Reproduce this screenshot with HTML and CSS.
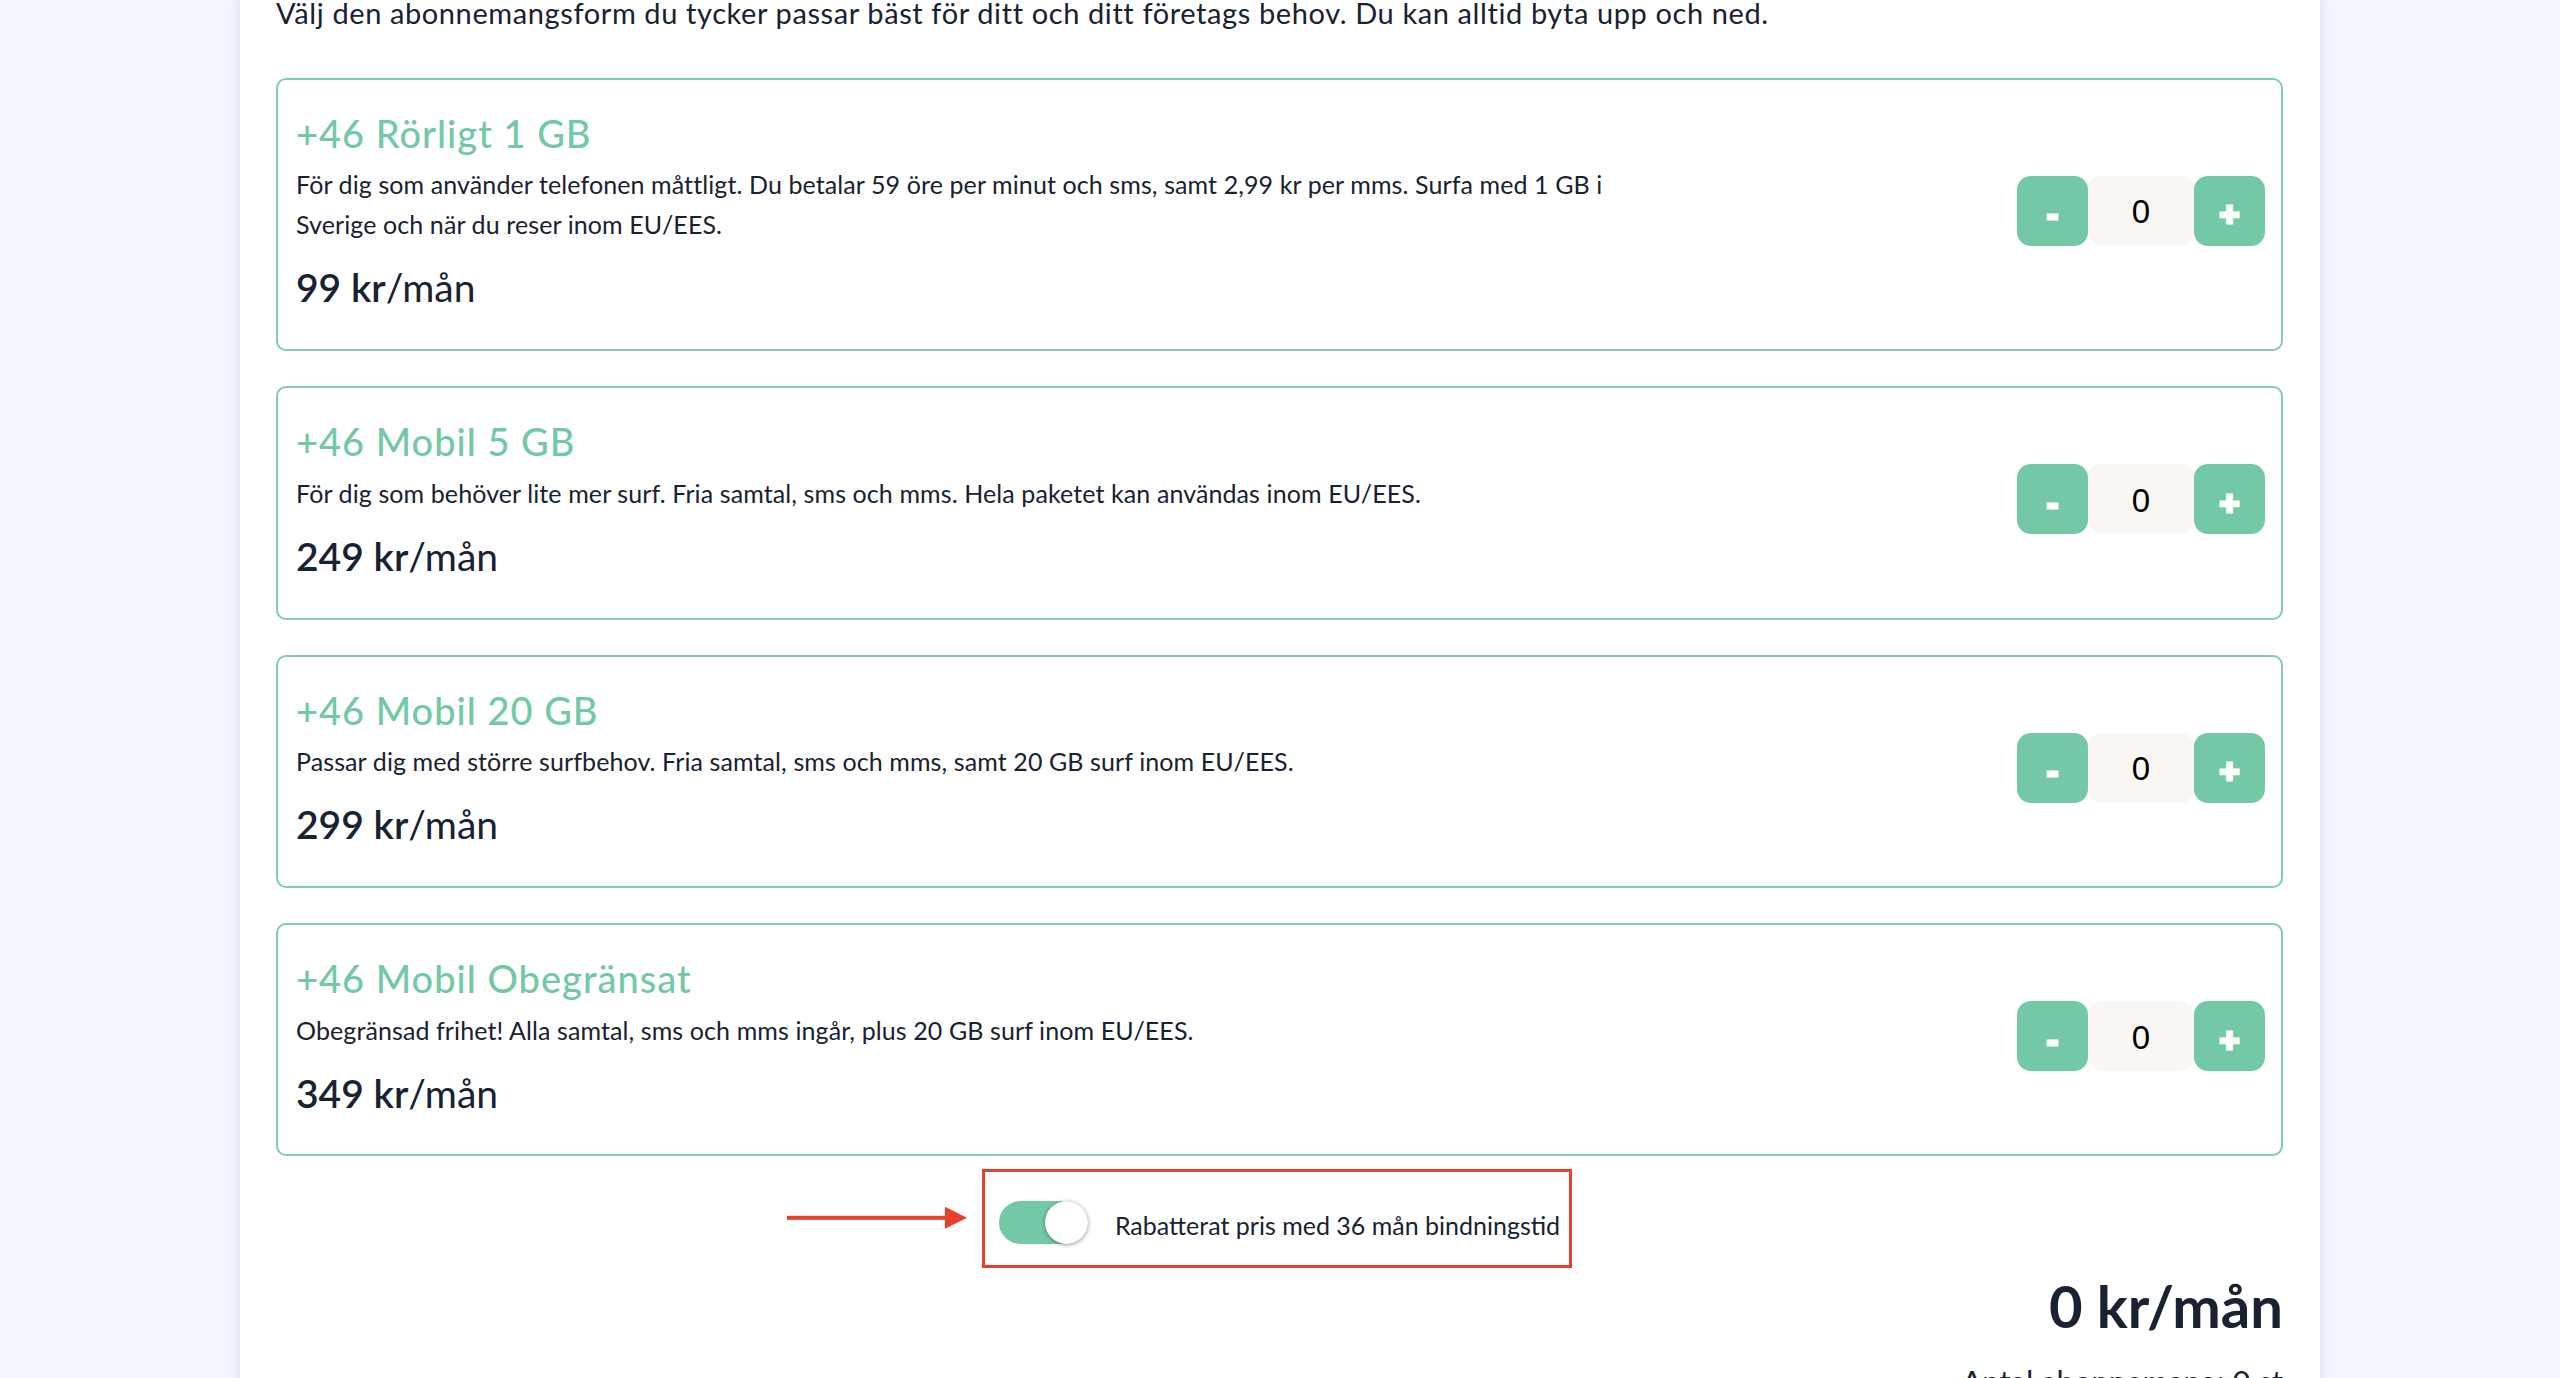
FILE: index.html
```html
<!DOCTYPE html>
<html lang="sv">
<head>
  <meta charset="UTF-8">
  <title>Välj abonnemang</title>
  <link rel="stylesheet" href="styles.css">
</head>
<body>
  <div class="panel">
    <p class="intro">Välj den abonnemangsform du tycker passar bäst för ditt och ditt företags behov. Du kan alltid byta upp och ned.</p>

    <div class="plans">
      <div class="plan">
        <div class="plan-info">
          <h2 class="plan-title">+46 Rörligt 1 GB</h2>
          <p class="plan-desc">För dig som använder telefonen måttligt. Du betalar 59 öre per minut och sms, samt 2,99 kr per mms. Surfa med 1 GB i Sverige och när du reser inom EU/EES.</p>
          <p class="plan-price"><span class="amount">99 kr</span>/mån</p>
        </div>
        <div class="counter">
          <button class="step">-</button>
          <span class="count">0</span>
          <button class="step">+</button>
        </div>
      </div>

      <div class="plan">
        <div class="plan-info">
          <h2 class="plan-title">+46 Mobil 5 GB</h2>
          <p class="plan-desc">För dig som behöver lite mer surf. Fria samtal, sms och mms. Hela paketet kan användas inom EU/EES.</p>
          <p class="plan-price"><span class="amount">249 kr</span>/mån</p>
        </div>
        <div class="counter">
          <button class="step">-</button>
          <span class="count">0</span>
          <button class="step">+</button>
        </div>
      </div>

      <div class="plan">
        <div class="plan-info">
          <h2 class="plan-title">+46 Mobil 20 GB</h2>
          <p class="plan-desc">Passar dig med större surfbehov. Fria samtal, sms och mms, samt 20 GB surf inom EU/EES.</p>
          <p class="plan-price"><span class="amount">299 kr</span>/mån</p>
        </div>
        <div class="counter">
          <button class="step">-</button>
          <span class="count">0</span>
          <button class="step">+</button>
        </div>
      </div>

      <div class="plan">
        <div class="plan-info">
          <h2 class="plan-title">+46 Mobil Obegränsat</h2>
          <p class="plan-desc">Obegränsad frihet! Alla samtal, sms och mms ingår, plus 20 GB surf inom EU/EES.</p>
          <p class="plan-price"><span class="amount">349 kr</span>/mån</p>
        </div>
        <div class="counter">
          <button class="step">-</button>
          <span class="count">0</span>
          <button class="step">+</button>
        </div>
      </div>
    </div>

    <div class="discount">
      <label class="discount-box">
        <svg class="arrow" width="180" height="24" viewBox="0 0 180 24">
          <rect x="0" y="10" width="160" height="4" fill="#e8402a"/>
          <polygon points="158,1 180,12 158,23" fill="#e8402a"/>
        </svg>
        <span class="toggle"><span class="knob"></span></span>
        <span class="discount-label">Rabatterat pris med 36 mån bindningstid</span>
      </label>
    </div>

    <div class="summary">
      <div class="total">0 kr/mån</div>
      <div class="count-line">Antal abonnemang: 0 st</div>
    </div>
  </div>
</body>
</html>
```

FILE: styles.css
```css
* {
  box-sizing: border-box;
}
body {
  margin: 0;
  background: #f2f6fe;
  font-family: 'Lato', 'Noto Sans', sans-serif;
  color: #182230;
  overflow: hidden;
}
.panel {
  width: 2080px;
  min-height: 100vh;
  margin: 0 auto;
  padding: 0 37px 40px 36px;
  background: #fff;
  box-shadow: 0 0 12px rgba(0, 0, 0, 0.12);
}
.intro {
  margin: -4px 0 0;
  font-size: 29px;
  letter-spacing: 0.6px;
  line-height: 1.2;
}
.plans {
  display: flex;
  flex-direction: column;
  gap: 35px;
  margin-top: 47px;
}
.plan {
  display: flex;
  align-items: center;
  justify-content: space-between;
  border: 2px solid #80cdab;
  border-radius: 10px;
  padding: 31px 16px 38px 18px;
}
.plan-title {
  margin: 0;
  font-size: 38px;
  font-weight: 500;
  letter-spacing: 1px;
  line-height: 1.2;
  color: #73c9a5;
}
.plan-desc {
  margin: 8px 0 0;
  max-width: 1345px;
  font-size: 25px;
  letter-spacing: 0.1px;
  line-height: 40px;
}
.plan-price {
  margin: 20px 0 0;
  font-size: 39px;
  line-height: 1.2;
}
.amount {
  font-weight: 600;
}
.counter {
  display: flex;
  align-items: center;
}
.step {
  width: 71px;
  height: 70px;
  padding: 8px 0 0;
  border: none;
  border-radius: 14px;
  background: #73c9a5;
  color: #fff;
  font-family: 'Liberation Sans', Arial, sans-serif;
  font-size: 34px;
  font-weight: bold;
  -webkit-text-stroke: 3px #fff;
  cursor: pointer;
}
.count {
  display: flex;
  align-items: center;
  justify-content: center;
  width: 106px;
  height: 70px;
  padding-top: 3px;
  border-radius: 14px;
  background: #f9f6f3;
  color: #000;
  font-family: 'Liberation Sans', Arial, sans-serif;
  font-size: 33px;
}
.discount {
  display: flex;
  justify-content: center;
  margin-top: 13px;
  padding-right: 5px;
}
.discount-box {
  position: relative;
  display: flex;
  align-items: center;
  gap: 27px;
  border: 3px solid #e8402a;
  padding: 29px 9px 21px 14px;
}
.arrow {
  position: absolute;
  right: calc(100% + 18px);
  top: 50%;
  transform: translateY(-55%);
}
.toggle {
  display: flex;
  justify-content: flex-end;
  width: 89px;
  height: 43px;
  border-radius: 22px;
  background: #73c9a5;
}
.knob {
  width: 43px;
  height: 43px;
  border-radius: 50%;
  background: #fff;
  box-shadow: 0 1px 4px rgba(0, 0, 0, 0.4);
}
.discount-label {
  padding-top: 4px;
  font-size: 25px;
  line-height: 30px;
}
.summary {
  text-align: right;
}
.total {
  margin-top: 3px;
  font-size: 58px;
  font-weight: 700;
  line-height: 1.2;
}
.count-line {
  margin-top: 22px;
  font-size: 31px;
  line-height: 1.2;
}
```
